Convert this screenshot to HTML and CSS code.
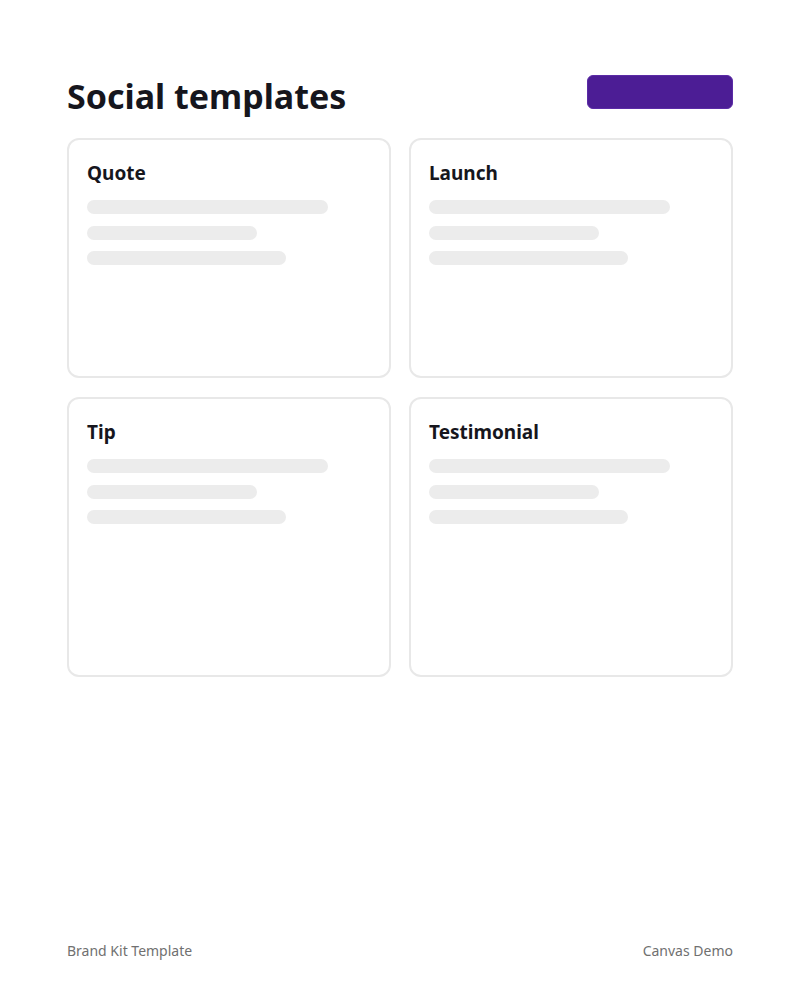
FILE: index.html
```html
<!DOCTYPE html>

<html>
<head>
    <meta charset="utf-8">
    <title>Social templates</title>
    <link rel="stylesheet" href="styles.css">
</head>
<body>

    <div class="page">
        <div class="header">
            <h1 class="title">Social templates</h1>
            <button type="button" class="primary"></button>
        </div>

        <div class="grid">
            <div class="card card-short">
                <h2 class="card-title">Quote</h2>
                <div class="bar bar-long"></div>
                <div class="bar bar-short"></div>
                <div class="bar bar-mid"></div>
            </div>
            <div class="card card-short">
                <h2 class="card-title">Launch</h2>
                <div class="bar bar-long"></div>
                <div class="bar bar-short"></div>
                <div class="bar bar-mid"></div>
            </div>
            <div class="card card-tall">
                <h2 class="card-title">Tip</h2>
                <div class="bar bar-long"></div>
                <div class="bar bar-short"></div>
                <div class="bar bar-mid"></div>
            </div>
            <div class="card card-tall">
                <h2 class="card-title">Testimonial</h2>
                <div class="bar bar-long"></div>
                <div class="bar bar-short"></div>
                <div class="bar bar-mid"></div>
            </div>
        </div>

        <div class="footer">
            <span>Brand Kit Template</span>
            <span>Canvas Demo</span>
        </div>
    </div>

</body>
</html>
```

FILE: styles.css
```css
body {
    margin: 0;
    font-family: "Noto Sans", "Open Sans", sans-serif;
    color: #16161d;
    background: #fff;
}

.page {
    width: 666px;
    margin: 0 auto;
    height: 1000px;
    box-sizing: border-box;
    padding-top: 72px;
    display: flex;
    flex-direction: column;
}

/* header */
.header {
    display: flex;
    align-items: flex-start;
    justify-content: space-between;
}

.title {
    margin: 4px 0 0;
    font-size: 34px;
    font-weight: 700;
    line-height: 40px;
}

.primary {
    margin-top: 3px;
    width: 146px;
    height: 34px;
    border: 1px solid #5b2ba6;
    border-radius: 6px;
    background: #4c1d95;
}

/* cards */
.grid {
    margin-top: 22px;
    display: grid;
    grid-template-columns: 1fr 1fr;
    gap: 19px 18px;
}

.card {
    border: 2px solid #e8e8e8;
    border-radius: 12px;
    padding: 18px;
    box-sizing: border-box;
}

.card-short {
    height: 240px;
}

.card-tall {
    height: 280px;
}

.card-title {
    margin: 0 0 12px;
    font-size: 19px;
    font-weight: 700;
    line-height: 30px;
}

.bar {
    height: 14px;
    border-radius: 7px;
    background: #ececec;
    margin-bottom: 11.5px;
}

.bar-long {
    width: 85%;
}

.bar-short {
    width: 60%;
}

.bar-mid {
    width: 70%;
}

/* footer */
.footer {
    margin-top: auto;
    margin-bottom: 40px;
    display: flex;
    justify-content: space-between;
    font-size: 14px;
    color: #707070;
}
```
